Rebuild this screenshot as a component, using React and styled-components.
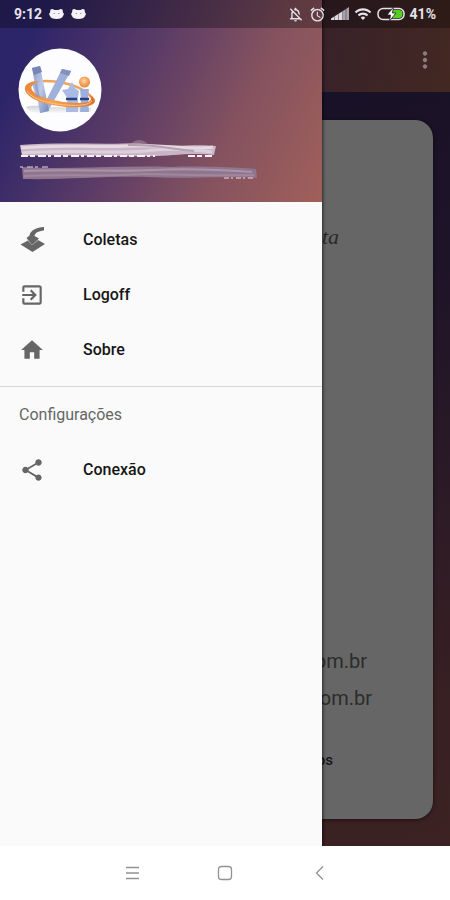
import styled, { createGlobalStyle } from "styled-components";
import {
  MdAlarm,
  MdExitToApp,
  MdHome,
  MdMoreVert,
  MdOutlineNotificationsOff,
  MdShare,
  MdWifi,
} from "react-icons/md";

const GlobalStyle = createGlobalStyle`
  * {
    box-sizing: border-box;
  }
  body {
    margin: 0;
    font-family: Roboto, "Liberation Sans", sans-serif;
  }
  button {
    padding: 0;
    border: none;
    background: transparent;
    color: inherit;
    font: inherit;
    cursor: pointer;
  }
`;

const Screen = styled.div`
  display: flex;
  flex-direction: column;
  min-height: 100vh;
  background: #fff;
`;

const Stage = styled.div`
  position: relative;
  flex: 1;
  display: flex;
  flex-direction: column;
  overflow: hidden;
  background: linear-gradient(165deg, #171026 10%, #1e1428 40%, #382023 85%, #3c2222);
`;

const StatusBar = styled.div`
  position: absolute;
  top: 0;
  left: 0;
  right: 0;
  z-index: 3;
  height: 28px;
  padding: 0 14px;
  display: flex;
  align-items: center;
  justify-content: space-between;
  background: rgba(0, 0, 0, 0.3);
  color: #e6e2ea;
  font-size: 14px;
  font-weight: 700;
`;

const StatusGroup = styled.div`
  display: flex;
  align-items: center;
  gap: ${(p) => p.$gap};
`;

const AppBar = styled.header`
  height: 92px;
  padding: 28px 12px 0;
  display: flex;
  align-items: center;
  justify-content: flex-end;
  background: linear-gradient(100deg, #2b1c33 40%, #3a2328 75%, #432822);
  color: #8a7f7c;
`;

const MoreButton = styled.button`
  display: flex;
`;

const Card = styled.main`
  flex: 1;
  margin: 28px 17px 27px 18px;
  padding: 107px 0 48px;
  display: flex;
  flex-direction: column;
  border-radius: 18px;
  background: #666;
  box-shadow: 0 1px 4px rgba(0, 0, 0, 0.5);
`;

const Slogan = styled.p`
  margin: 0 94px auto 0;
  text-align: right;
  font: italic 22px/20px "Liberation Serif", serif;
  color: #2a2a2a;
`;

const Contact = styled.p`
  margin: 0;
  padding-right: ${(p) => p.$end};
  text-align: right;
  font-size: 20px;
  line-height: 37px;
  color: #2c2c2c;
`;

const Rights = styled.p`
  margin: 32px 100px 0 0;
  text-align: right;
  font-size: 15px;
  line-height: 22px;
  font-weight: 500;
  color: #161616;
`;

const Drawer = styled.aside`
  position: absolute;
  top: 0;
  bottom: 0;
  left: 0;
  z-index: 2;
  width: calc(100% - 128px);
  background: #fafafa;
  box-shadow: 0 0 3px 1px rgba(0, 0, 0, 0.6);
`;

const DrawerHeader = styled.div`
  height: 202px;
  padding: 48px 18px 0;
  background: linear-gradient(115deg, #2d2569 12%, #5e3d66 45%, #84525f 70%, #a0605a);
`;

const Avatar = styled.svg`
  display: block;
  width: 84px;
  height: 84px;
`;

const Scribble = styled.svg`
  display: block;
  width: 244px;
  height: 46px;
  margin-top: 6px;
`;

const Menu = styled.nav`
  padding: ${(p) => p.$pad};
`;

const MenuItem = styled.button`
  width: 100%;
  height: 55px;
  && {
    padding: 0 19px;
  }
  display: flex;
  align-items: center;
  gap: 38px;
  text-align: left;
  color: #666;
`;

const MenuLabel = styled.span`
  font-size: 16px;
  font-weight: 500;
  color: #161616;
`;

const Divider = styled.hr`
  height: 1px;
  margin: 0;
  border: none;
  background: #d8d8d8;
`;

const Subheader = styled.h2`
  margin: 0;
  padding: 0 19px;
  font-size: 16px;
  line-height: 55px;
  font-weight: 400;
  color: #666;
`;

const NavBar = styled.footer`
  height: 54px;
  display: flex;
  align-items: center;
  justify-content: center;
  gap: 70px;
  color: #929292;
`;

const NavButton = styled.button`
  width: 24px;
  height: 24px;
`;

const CatIcon = () => (
  <svg width="15" height="12" viewBox="0 0 15 12">
    <path
      d="M1.500 1.500l2-.5 2 1h4l2-1 2 .5.5 3 1 1.500-1 2C13.500 10 11 11 7.500 11S1.500 10 1 8L0 6l1-1.500z"
      fill="#f4f2f6"
    />
    <path d="M4.500 5.500h1.500M9 5.500h1.500" stroke="#a79fb0" strokeWidth="1" />
  </svg>
);

const SignalIcon = () => (
  <svg width="18" height="14" viewBox="0 0 18 14">
    <path d="M0 13v-1.500L12 4v9z" fill="#dcd9de" />
    <path d="M12 13V4l6-4v13z" fill="#a7a2aa" />
    <path d="M3.500 8v5M7.500 5v8M11.500 3v10M15 1v12" stroke="#4a3540" strokeWidth=".5" />
  </svg>
);

const BatteryIcon = () => (
  <svg width="28" height="14" viewBox="0 0 28 14">
    <rect x="1" y="1.500" width="26" height="11" rx="5" fill="none" stroke="#e6e2ea" strokeWidth="1.500" />
    <path d="M16 3h6.500a3.500 3.500 0 013 3.500v1a3.500 3.500 0 01-3 3.500H16z" fill="#54d020" />
    <path d="M16.500 0L10 8h3.500l-1 6L19 6h-3.500z" fill="#fff" stroke="#2a1c2c" strokeWidth=".8" />
  </svg>
);

const ColetasIcon = () => (
  <svg width="26" height="26" viewBox="1 1 26 26">
    <path d="M2.500 18.500L10 14.500l4 3.500 6-4 7 4-12.500 8z" fill="currentColor" />
    <path
      d="M26 1C18.500 1.500 12.500 4 11.500 9.500L8.500 12l5.500 7 7-6.500-4.500-2.500c.5-3 3.500-5 9.500-5.500z"
      fill="currentColor"
    />
    <path d="M9.500 14l4.300 5 6.200-4.500" fill="none" stroke="#b5b5b5" strokeWidth=".6" />
  </svg>
);

const Logo = () => (
  <Avatar viewBox="0 0 84 84" role="img" aria-label="Vai">
    <defs>
      <linearGradient id="steel" x1="0" y1="0" x2="1" y2="1">
        <stop offset="0" stopColor="#8998c4" />
        <stop offset=".5" stopColor="#bdcbea" />
        <stop offset="1" stopColor="#7186b8" />
      </linearGradient>
      <linearGradient id="ring" x1="0" y1="0" x2="1" y2="0">
        <stop offset="0" stopColor="#e8863a" />
        <stop offset=".4" stopColor="#f5a254" />
        <stop offset="1" stopColor="#df7528" />
      </linearGradient>
      <radialGradient id="ball" cx=".45" cy=".4">
        <stop offset="0" stopColor="#ffd9a8" />
        <stop offset="1" stopColor="#ed8e40" />
      </radialGradient>
      <linearGradient id="shade" x1="0" y1="0" x2="0" y2="1">
        <stop offset="0" stopColor="#cfd2d4" />
        <stop offset="1" stopColor="#fff" />
      </linearGradient>
    </defs>
    <circle cx="42" cy="42" r="41.500" fill="#fdfdff" />
    <path d="M8 59c8-2 16-1 20 0l45 1v4l-51 2c-7-1-12-3-14-7z" fill="url(#shade)" />
    <path d="M14 35c14-4 50-2 62 18" fill="none" stroke="#f3a25c" strokeWidth="2.500" />
    <path d="M44 21l9 2-23 40-8 2z" fill="#9fb0da" />
    <path d="M44 21l9 2-2 5-9-3z" fill="#8491bd" />
    <path d="M14 20l8-2 9 45-9 2z" fill="url(#steel)" />
    <path d="M14 20l8-2 2 6-8 3z" fill="#7886b5" />
    <path d="M44 42l6-1 4-7 3 6 4 3-1 6v15H48v-6l2-7z" fill="#a9bbe4" />
    <path d="M62 41h9l-1 9 1 14h-9l1-13z" fill="#9db0dc" />
    <path d="M48 51h11M62 51h9" stroke="#283f80" strokeWidth="2.500" />
    <circle cx="66.500" cy="34" r="5.500" fill="url(#ball)" />
    <path
      d="M22 33C12 33 6 36 7 42c3 10 22 15 41 17 17 1 29-1 29-6 0-3-3-5-6-7 2 3 3 5 1 7-4 3-14 2-27 1C29 51 18 48 14 42c-2-4 1-6 8-9z"
      fill="url(#ring)"
    />
    <path d="M9 43c5 8 22 13 40 14 12 1 22 0 25-4" fill="none" stroke="#ffc283" strokeWidth="1" />
    <path d="M14 36l5-1 3 14-4-1z" fill="#8998c4" opacity=".7" />
  </Avatar>
);

// Name and e-mail of the account, brushed over
const AccountMask = () => (
  <Scribble viewBox="0 0 244 46" aria-hidden="true">
    <path d="M2 7c40-3 84 0 120-2l16 2c24 2 38-1 60 1l-2 9c-30-3-44 2-70 1-40 1-80-2-122 0z" fill="#c9b5c6" />
    <path d="M3 10c40-4 70 0 108-2s60 5 84 1" fill="none" stroke="#e5d9e2" strokeWidth="3" />
    <path d="M4 15c46-4 82 1 124-2 18-3 42-2 66 1" fill="none" stroke="#ddd0dc" strokeWidth="3" />
    <path d="M110 7c30-1 40 4 66 6" fill="none" stroke="#b49fb3" strokeWidth="2" />
    <path d="M114 5c4-4 11-4 16 1z" fill="#8d6a84" />
    <path d="M3 18h134M170 18h24" fill="none" stroke="#f6f0f5" strokeWidth="2" strokeDasharray="7 2 5 3 8 2 3 3" />
    <path d="M4 29c44 3 100-2 150 0 26-1 58 0 84 2l1 9c-40-2-72 1-110-1-44-1-84 3-124 2z" fill="#90758e" />
    <path d="M6 33c50-2 90 1 130-1s70 0 98 2" fill="none" stroke="#ad93a9" strokeWidth="2" />
    <path d="M6 38c40-2 80 1 120-2 40 1 80 2 110 1" fill="none" stroke="#a1869d" strokeWidth="2" />
    <path d="M2 29h30" fill="none" stroke="#e8dce6" strokeWidth="1" strokeDasharray="3 4 6 2" />
    <path d="M206 40h31" fill="none" stroke="#eadfe6" strokeWidth="1" strokeDasharray="5 2 2 3" />
  </Scribble>
);

const items = [
  { label: "Coletas", icon: <ColetasIcon /> },
  { label: "Logoff", icon: <MdExitToApp size={26} /> },
  { label: "Sobre", icon: <MdHome size={26} /> },
];

const App = () => {
  return (
    <Screen>
      <GlobalStyle />
      <Stage>
        <StatusBar>
          <StatusGroup $gap="7px">
            <span>9:12</span>
            <CatIcon />
            <CatIcon />
          </StatusGroup>
          <StatusGroup $gap="5px">
            <MdOutlineNotificationsOff size={17} />
            <MdAlarm size={17} />
            <SignalIcon />
            <MdWifi size={18} />
            <BatteryIcon />
            <span>41%</span>
          </StatusGroup>
        </StatusBar>
        <AppBar>
          <MoreButton aria-label="Menu">
            <MdMoreVert size={26} />
          </MoreButton>
        </AppBar>
        <Card>
          <Slogan>ta</Slogan>
          <Contact $end="66px">om.br</Contact>
          <Contact $end="61px">om.br</Contact>
          <Rights>os</Rights>
        </Card>
        <Drawer>
          <DrawerHeader>
            <Logo />
            <AccountMask />
          </DrawerHeader>
          <Menu $pad="10px 0 9px">
            {items.map((item) => (
              <MenuItem key={item.label}>
                {item.icon}
                <MenuLabel>{item.label}</MenuLabel>
              </MenuItem>
            ))}
          </Menu>
          <Divider />
          <Subheader>Configurações</Subheader>
          <Menu $pad="0">
            <MenuItem>
              <MdShare size={26} />
              <MenuLabel>Conexão</MenuLabel>
            </MenuItem>
          </Menu>
        </Drawer>
      </Stage>
      <NavBar>
        <NavButton aria-label="Recentes">
          <svg width="24" height="24" viewBox="0 0 24 24">
            <path d="M7 6.500h13M7 12h13M7 17.500h13" stroke="currentColor" strokeWidth="1.300" />
          </svg>
        </NavButton>
        <NavButton aria-label="Início">
          <svg width="24" height="24" viewBox="0 0 24 24">
            <rect x="5.500" y="5.500" width="13" height="13" rx="3" fill="none" stroke="currentColor" strokeWidth="1.300" />
          </svg>
        </NavButton>
        <NavButton aria-label="Voltar">
          <svg width="24" height="24" viewBox="0 0 24 24">
            <path d="M16 5.500L9.500 12l6.500 6.500" fill="none" stroke="currentColor" strokeWidth="1.300" />
          </svg>
        </NavButton>
      </NavBar>
    </Screen>
  );
};

export default App;
